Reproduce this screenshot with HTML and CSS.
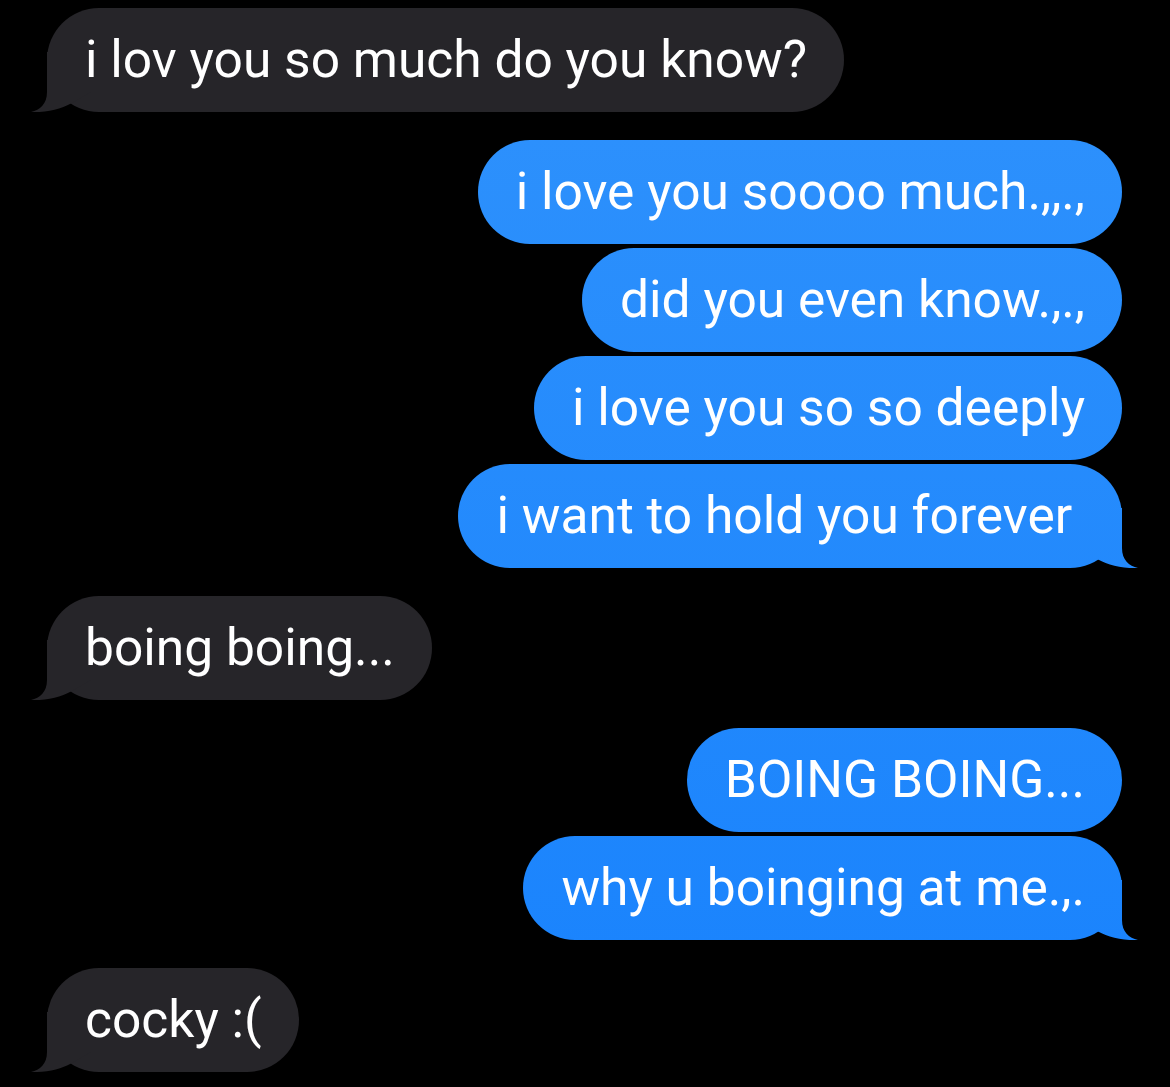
FILE: index.html
```html
<!DOCTYPE html>
<html lang="en">
<head>
    <meta charset="UTF-8">
    <title>Messages</title>
    <link rel="stylesheet" href="styles.css">
</head>
<body>
    <div class="thread">
        <div class="group received">
            <p class="bubble tail">i lov you so much do you know?</p>
        </div>
        <div class="group sent">
            <p class="bubble">i love you soooo much.,,.,</p>
            <p class="bubble">did you even know.,.,</p>
            <p class="bubble">i love you so so deeply</p>
            <p class="bubble tail">i want to hold you forever&nbsp;</p>
        </div>
        <div class="group received">
            <p class="bubble tail">boing boing...</p>
        </div>
        <div class="group sent">
            <p class="bubble">BOING BOING...</p>
            <p class="bubble tail">why u boinging at me.,.</p>
        </div>
        <div class="group received">
            <p class="bubble tail">cocky :(</p>
        </div>
    </div>
</body>
</html>
```

FILE: styles.css
```css
body {
    margin: 0;
    background-color: #000;
    font-family: Roboto, "Liberation Sans", Arial, sans-serif;
}

.thread {
    display: flex;
    flex-direction: column;
    gap: 28px;
    padding: 8px 48px 0 47px;
}

.group {
    display: flex;
    flex-direction: column;
    gap: 4px;
}

.received {
    align-items: flex-start;
}

.sent {
    align-items: flex-end;
}

.bubble {
    position: relative;
    z-index: 0;
    margin: 0;
    padding: 22px 37px 22px 38px;
    font-size: 51.5px;
    line-height: 60px;
    color: #fff;
    border-radius: 52px;
    white-space: nowrap;
}

.received .bubble {
    background: #262529;
}

/* the blue shifts slightly down the screen, like the real app */
.sent .bubble {
    background: linear-gradient(#2f92fc, #1882fd) fixed;
}

/* little hook at the bottom corner of the last bubble in a run */
.tail::after {
    content: "";
    position: absolute;
    z-index: -1;
    bottom: 0;
    width: 60px;
    height: 60px;
    background: inherit;
    clip-path: path("M0 40 L20 51.5 C30 57 44 60.5 60 60 C51 58 44 52 44 40 L44 0 L0 0 Z");
}

.sent .tail::after {
    right: -16px;
}

.received .tail::after {
    left: -16px;
    transform: scaleX(-1);
}
```
